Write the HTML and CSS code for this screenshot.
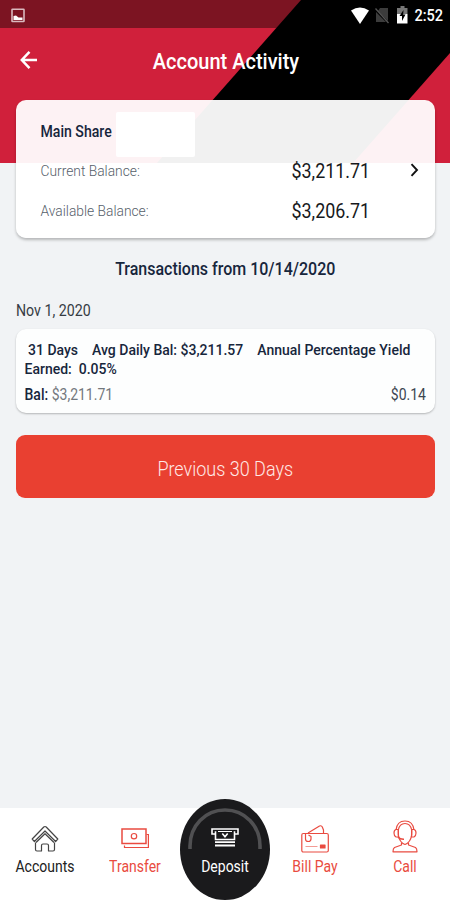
FILE: index.html
```
<!DOCTYPE html>
<html lang="en">

<head>
    <meta charset="utf-8">
    <title>Account Activity</title>
    <link rel="stylesheet" href="styles.css">
</head>

<body>
    <div class="screen">
        <header class="header">
            <svg class="header-bg" width="450" height="163" viewBox="0 0 450 163">
                <rect width="450" height="163" fill="#d0203b" />
                <rect width="450" height="28" fill="#7c1422" />
                <path d="M301 0H450V53L353 163H157Z" fill="#000" />
            </svg>
            <div class="status-bar">
                <svg width="14" height="15" viewBox="0 0 14 15">
                    <rect x="1" y="1.2" width="12" height="12.3" rx="0.5" fill="none" stroke="#d9b9be" stroke-width="1.6" />
                    <path d="M2.5 12V8L5 7.5L7.5 9.5H11.5V12Z" fill="#fff" />
                </svg>
                <div class="status-icons">
                    <svg width="18" height="17" viewBox="0 0 18 17">
                        <path d="M0 3.5Q9-2.5 18 3.5L9 17Z" fill="#fff" />
                    </svg>
                    <svg width="14" height="17" viewBox="0 0 14 17">
                        <path d="M5 1H13V14L3 4ZM1 5L11 15H1Z" fill="#3c3c3c" />
                        <path d="M0.5 1.5L13.5 16" stroke="#555" stroke-width="1.3" />
                    </svg>
                    <svg width="11" height="18" viewBox="0 0 11 18">
                        <path d="M3.5 0H7.5V2H10.5V8H0V2H3.5Z" fill="#777" />
                        <path d="M0 8H10.5V17.5H0Z" fill="#fff" />
                        <path d="M6.5 4L2.5 10H5V15L8.5 8.5H6.2Z" fill="#000" />
                    </svg>
                    <span class="clock tall">2:52</span>
                </div>
            </div>
            <div class="title-bar">
                <svg width="18" height="20" viewBox="0 0 18 20">
                    <path d="M17 10H2M9.5 1.8L1.8 10L9.5 18.2" fill="none" stroke="#fff" stroke-width="2.5" />
                </svg>
                <h1 class="title tall">Account Activity</h1>
            </div>
        </header>

        <main class="content">
            <section class="account-card">
                <div class="account-name">
                    <span class="name tall">Main Share</span>
                    <span class="mask"></span>
                </div>
                <div class="balance-row">
                    <span class="label current tall">Current Balance:</span>
                    <span class="amount tall">$3,211.71</span>
                    <svg class="chevron" width="9" height="14" viewBox="0 0 9 14">
                        <path d="M1.5 1.2L7 7L1.5 12.8" fill="none" stroke="#111" stroke-width="1.9" />
                    </svg>
                </div>
                <div class="balance-row">
                    <span class="label available tall">Available Balance:</span>
                    <span class="amount tall">$3,206.71</span>
                </div>
            </section>

            <h2 class="range tall">Transactions from 10/14/2020</h2>
            <div class="date"><span class="tall">Nov 1, 2020</span></div>

            <section class="transaction">
                <div class="description">
                    <div class="description-line">
                        <span class="tall">31 Days</span>
                        <span class="tall">Avg Daily Bal: $3,211.57</span>
                        <span class="tall">Annual Percentage Yield</span>
                    </div>
                    <div class="earned tall">Earned:&nbsp; 0.05%</div>
                </div>
                <div class="transaction-row">
                    <span class="tall"><b>Bal:</b> <span class="bal">$3,211.71</span></span>
                    <span class="dividend tall">$0.14</span>
                </div>
            </section>

            <button class="previous"><span class="tall">Previous 30 Days</span></button>
        </main>

        <nav class="tabs">
            <a class="tab active">
                <svg width="28" height="28" viewBox="0 0 28 28" fill="none" stroke="#444" stroke-width="1.2" stroke-linejoin="round">
                    <path d="M1.2 14L12.8 2Q14 1 15.2 2L26.8 14L24.6 16.5L14 6L3.4 16.5Z" />
                    <path d="M4.5 17.5V24.5Q4.5 26 6 26H10.5V20.5Q10.5 19 12 19H16Q17.5 19 17.5 20.5V26H22Q23.5 26 23.5 24.5V17.5" />
                    <path d="M5 17.5L14 8.7L23 17.5" />
                </svg>
                <span class="tall">Accounts</span>
            </a>
            <a class="tab">
                <svg width="28" height="28" viewBox="0 0 28 28" fill="none" stroke="#e94b40" stroke-width="1.2">
                    <rect x="1" y="4" width="24" height="14.5" stroke-width="1.5" />
                    <path d="M25.5 9.5H27.4V22.5H3.5V20.5" />
                    <circle cx="13" cy="11.2" r="2.7" />
                </svg>
                <span class="tall">Transfer</span>
            </a>
            <div class="tab">
                <a class="deposit">
                    <svg class="arc" width="74" height="42" viewBox="0 0 74 42">
                        <path d="M2 41V38C2 18 17 2 37 2S72 18 72 38V41" fill="none" stroke="#505052" stroke-width="3.6" />
                    </svg>
                    <svg width="28" height="20" viewBox="0 0 28 20" fill="none" stroke="#fff">
                        <path d="M5 6H1V1H27V6H23" stroke-width="1.6" />
                        <path d="M4.5 3.2V11.5H23.5V3.2" stroke-width="1.6" />
                        <path d="M7 3.5H21" stroke-width="1" />
                        <path d="M11.3 5.5L14 8.8L16.7 5.5" stroke-width="1.6" />
                        <path d="M4 14.2H24M4 17.5H24" stroke-width="1.8" />
                    </svg>
                    <span class="tall">Deposit</span>
                </a>
            </div>
            <a class="tab">
                <svg width="28" height="28" viewBox="0 0 28 28" fill="none" stroke="#e94b40" stroke-width="1.2" stroke-linejoin="round">
                    <rect x="0.8" y="8.5" width="26.5" height="18.5" rx="1.5" />
                    <path d="M7 8L18.5 1Q20.5 0.2 21.3 2L22.5 5V8" />
                    <path d="M4.5 9V14Q4.5 16.5 7.2 16.5Q10 16.5 10 14V11.5L7.5 10" />
                    <path d="M4.5 21.5H16.5" stroke-width="0.8" stroke-opacity="0.7" />
                    <rect x="19.5" y="20" width="4.5" height="3" fill="#e94b40" />
                </svg>
                <span class="tall">Bill Pay</span>
            </a>
            <a class="tab">
                <svg width="26" height="33" viewBox="0 0 26 33" fill="none" stroke="#e94b40" stroke-width="1.2" stroke-linejoin="round">
                    <path d="M4 10Q5 1 13 1T22 10" />
                    <path d="M6.3 10Q7.5 3.5 13 3.5T19.7 10" />
                    <path d="M6.3 9V15Q7.5 22.5 13 24.5Q18.5 22.5 19.7 15V9" />
                    <path d="M6.3 9.5H4Q2 10 2 13T4 17H6.5ZM19.7 9.5H22Q24 10 24 13T22 17H19.5Z" />
                    <path d="M6 17Q8 19.5 12 19.3" stroke-width="1.5" />
                    <path d="M9.5 22.5V25L2.5 27.5Q1 28.5 1 31.8H25Q25 28.5 23.5 27.5L16.5 25V22.5" />
                </svg>
                <span class="tall">Call</span>
            </a>
        </nav>
    </div>
</body>

</html>
```

FILE: styles.css
```
* {
    box-sizing: border-box;
}

body {
    margin: 0;
    font-family: Roboto, "Liberation Sans", sans-serif;
    background: #f1f3f5;
    color: #17263c;
}

.screen {
    width: 450px;
    height: 900px;
    display: flex;
    flex-direction: column;
    overflow: hidden;
}

/* narrow, tall lettering */
.tall {
    display: inline-block;
    transform: scaleY(1.12);
    white-space: nowrap;
}

.header {
    position: relative;
    flex: none;
    height: 163px;
    color: #fff;
}

/* diagonal stripe behind the title */
.header-bg {
    position: absolute;
    top: 0;
    left: 0;
}

.status-bar {
    position: relative;
    height: 28px;
    padding: 2px 7px 0 11px;
    display: flex;
    justify-content: space-between;
    align-items: center;
}

.status-icons {
    display: flex;
    align-items: center;
    gap: 8px;
}

.status-icons svg:first-child {
    margin-right: -2px;
}

.clock {
    font-size: 14.5px;
    font-weight: 500;
    margin-left: -2px;
}

.title-bar {
    position: relative;
    height: 64px;
    padding-left: 20px;
    display: flex;
    align-items: center;
}

.title {
    flex: 1;
    margin: 2px 36px 0 0;
    font-size: 20px;
    font-weight: 500;
    text-align: center;
}

.content {
    position: relative;
    flex: 1;
    margin-top: -63px;
    padding: 0 15.5px 0 16px;
}

.account-card {
    height: 138px;
    padding: 12px 14px 0 24.5px;
    border-radius: 10px;
    background: rgba(255, 255, 255, 0.945);
    box-shadow: 0 2px 3px rgba(0, 0, 0, 0.25);
}

.account-name {
    height: 38px;
    display: flex;
    gap: 4px;
}

.name {
    margin-top: 12px;
    font-size: 14.1px;
    font-weight: 500;
}

.mask {
    width: 79px;
    height: 45px;
    border-radius: 2px;
    background: #fff;
}

.balance-row {
    height: 40px;
    display: grid;
    grid-template-columns: 251px 118px 1fr;
    align-items: center;
}

.label {
    justify-self: start;
    font-size: 13.8px;
    font-weight: 300;
    color: #56606a;
}

.amount {
    justify-self: start;
    font-size: 17.9px;
    color: #17191c;
}

.range {
    display: block;
    margin: 21px 0 0;
    font-size: 16px;
    line-height: 20px;
    font-weight: 500;
    text-align: center;
}

.date {
    margin-top: 21px;
    font-size: 14.2px;
    line-height: 20px;
    color: #353b43;
}

.transaction {
    height: 84px;
    margin-top: 9px;
    padding: 12px 8.5px 0;
    border-radius: 10px;
    background: #fdfefe;
    box-shadow: 0 1px 2px rgba(0, 0, 0, 0.25);
    font-size: 14px;
}

.description {
    line-height: 19px;
    font-weight: 500;
}

.description-line {
    display: flex;
    gap: 14px;
    padding-left: 3.5px;
}

.description .tall {
    transform: scaleY(1.05);
}

.earned {
    display: block;
}

.transaction-row {
    display: flex;
    justify-content: space-between;
    margin-top: 5px;
    font-size: 14px;
    line-height: 20px;
}

.transaction-row b {
    font-weight: 500;
}

.bal {
    color: #73787d;
}

.dividend {
    color: #3c4651;
}

.previous {
    display: block;
    width: 100%;
    height: 63px;
    margin-top: 22px;
    padding: 3px 0 0;
    border: 0;
    border-radius: 9px;
    background: #e94031;
    color: #ffe9e6;
    font-family: inherit;
    font-size: 18px;
    font-weight: 300;
}

.tabs {
    flex: none;
    height: 92px;
    display: grid;
    grid-template-columns: repeat(5, 1fr);
    background: #fff;
}

.tab {
    position: relative;
    height: 68px;
    display: flex;
    flex-direction: column;
    align-items: center;
    justify-content: flex-end;
    gap: 3px;
    font-size: 14px;
    line-height: 20px;
    color: #e94b40;
}

.tab.active {
    color: #222;
}

/* raised button over the tab bar */
.deposit {
    position: absolute;
    top: -9px;
    left: 0;
    width: 90px;
    height: 101px;
    padding-top: 29px;
    border-radius: 50%;
    background: #1a1a1c;
    color: #fff;
    display: flex;
    flex-direction: column;
    align-items: center;
    gap: 8px;
}

.arc {
    position: absolute;
    top: 9px;
    left: 8px;
}
```
